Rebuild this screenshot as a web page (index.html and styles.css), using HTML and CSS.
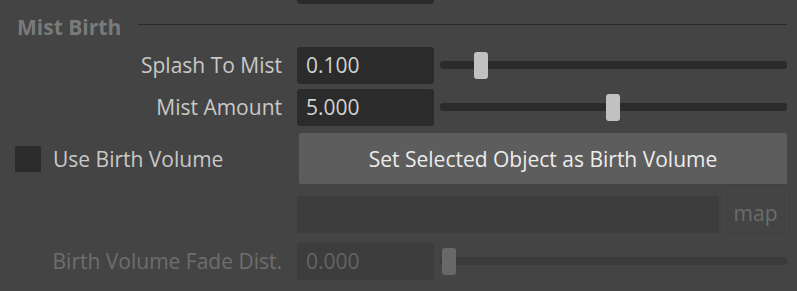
FILE: index.html
```html
<!DOCTYPE html>
<html lang="en">
<head>
  <meta charset="UTF-8">
  <meta name="viewport" content="width=device-width, initial-scale=1.0">
  <title>Mist Birth</title>
  <link rel="stylesheet" href="styles.css">
</head>
<body>
  <div class="panel">
    <div class="row top-row">
      <div></div>
      <div class="field-stub"></div>
    </div>

    <div class="section-header">
      <span class="section-title">Mist Birth</span>
      <span class="section-line"></span>
    </div>

    <div class="row slider-row first">
      <label class="attr-label">Splash To Mist</label>
      <div class="num-field">0.100</div>
      <div class="slider"><div class="track"></div><div class="handle" style="left: 34px"></div></div>
    </div>

    <div class="row slider-row">
      <label class="attr-label">Mist Amount</label>
      <div class="num-field">5.000</div>
      <div class="slider"><div class="track"></div><div class="handle" style="left: 166px"></div></div>
    </div>

    <div class="row button-row">
      <div class="check-group">
        <span class="checkbox"></span>
        <span class="check-label">Use Birth Volume</span>
      </div>
      <button class="action-btn">Set Selected Object as Birth Volume</button>
    </div>

    <div class="row map-row">
      <div></div>
      <div class="text-field disabled"></div>
      <div class="map-btn">map</div>
    </div>

    <div class="row slider-row disabled-row">
      <label class="attr-label">Birth Volume Fade Dist.</label>
      <div class="num-field">0.000</div>
      <div class="slider"><div class="track"></div><div class="handle" style="left: 2px"></div></div>
    </div>
  </div>
</body>
</html>
```

FILE: styles.css
```css
body {
  margin: 0;
  background: #444444;
  font-family: 'Open Sans', 'Noto Sans', sans-serif;
  font-size: 21px;
  color: #c8c8c8;
  width: 797px;
  height: 291px;
  overflow: hidden;
}

.panel {
  padding: 0 10px 0 0;
}

.row {
  display: grid;
  grid-template-columns: 282px 137px 1fr;
  column-gap: 15px;
  align-items: center;
}

.top-row {
  height: 4px;
}

.field-stub {
  height: 4px;
  background: #2b2b2b;
  border-radius: 0 0 3px 3px;
}

.section-header {
  display: flex;
  align-items: center;
  height: 40px;
  margin-top: 2px;
  padding-left: 17px;
}

.section-title {
  font-weight: bold;
  color: #7a7a7a;
  line-height: 1;
  margin-top: 2px;
}

.section-line {
  flex: 1;
  height: 1px;
  background: #2a2a2a;
  margin-left: 17px;
  margin-top: -3px;
}

.slider-row {
  height: 37px;
  margin-top: 5px;
}

.slider-row.first {
  margin-top: 1px;
}

.attr-label {
  text-align: right;
  line-height: 37px;
}

.num-field {
  background: #2b2b2b;
  border-radius: 3px;
  height: 37px;
  line-height: 37px;
  padding-left: 9px;
  box-sizing: border-box;
  color: #d2d2d2;
}

.slider {
  position: relative;
  height: 37px;
  margin-left: -9px;
}

.track {
  position: absolute;
  left: 0;
  right: 0;
  top: 14px;
  height: 8px;
  background: #2b2b2b;
  border-radius: 3px;
}

.handle {
  position: absolute;
  top: 5px;
  width: 14px;
  height: 27px;
  background: #c1c1c1;
  border-radius: 3px;
}

.button-row {
  grid-template-columns: 297px 1fr;
  column-gap: 2px;
  margin-top: 7px;
  height: 51px;
}

.check-group {
  display: flex;
  align-items: center;
  padding-left: 15px;
}

.checkbox {
  width: 26px;
  height: 26px;
  background: #2b2b2b;
  border-radius: 2px;
}

.check-label {
  margin-left: 12px;
}

.action-btn {
  height: 51px;
  border: none;
  border-radius: 2px;
  background: #5d5d5d;
  color: #ececec;
  font-family: inherit;
  font-size: 21px;
  padding: 0;
}

.map-row {
  grid-template-columns: 282px 422px 1fr;
  column-gap: 15px;
  margin-top: 6px;
  height: 49px;
}

.text-field.disabled {
  height: 37px;
  background: #3d3d3d;
  border-radius: 3px;
}

.map-btn {
  height: 49px;
  margin-left: -10px;
  border: 1px solid #494949;
  box-sizing: border-box;
  border-radius: 2px;
  color: #6c6c6c;
  text-align: center;
  line-height: 45px;
}

.disabled-row {
  margin-top: 4px;
}

.disabled-row .attr-label {
  color: #6e6e6e;
}

.disabled-row .num-field {
  background: #3d3d3d;
  color: #646464;
}

.disabled-row .track {
  background: #3b3b3b;
}

.disabled-row .handle {
  background: #686868;
}
```
